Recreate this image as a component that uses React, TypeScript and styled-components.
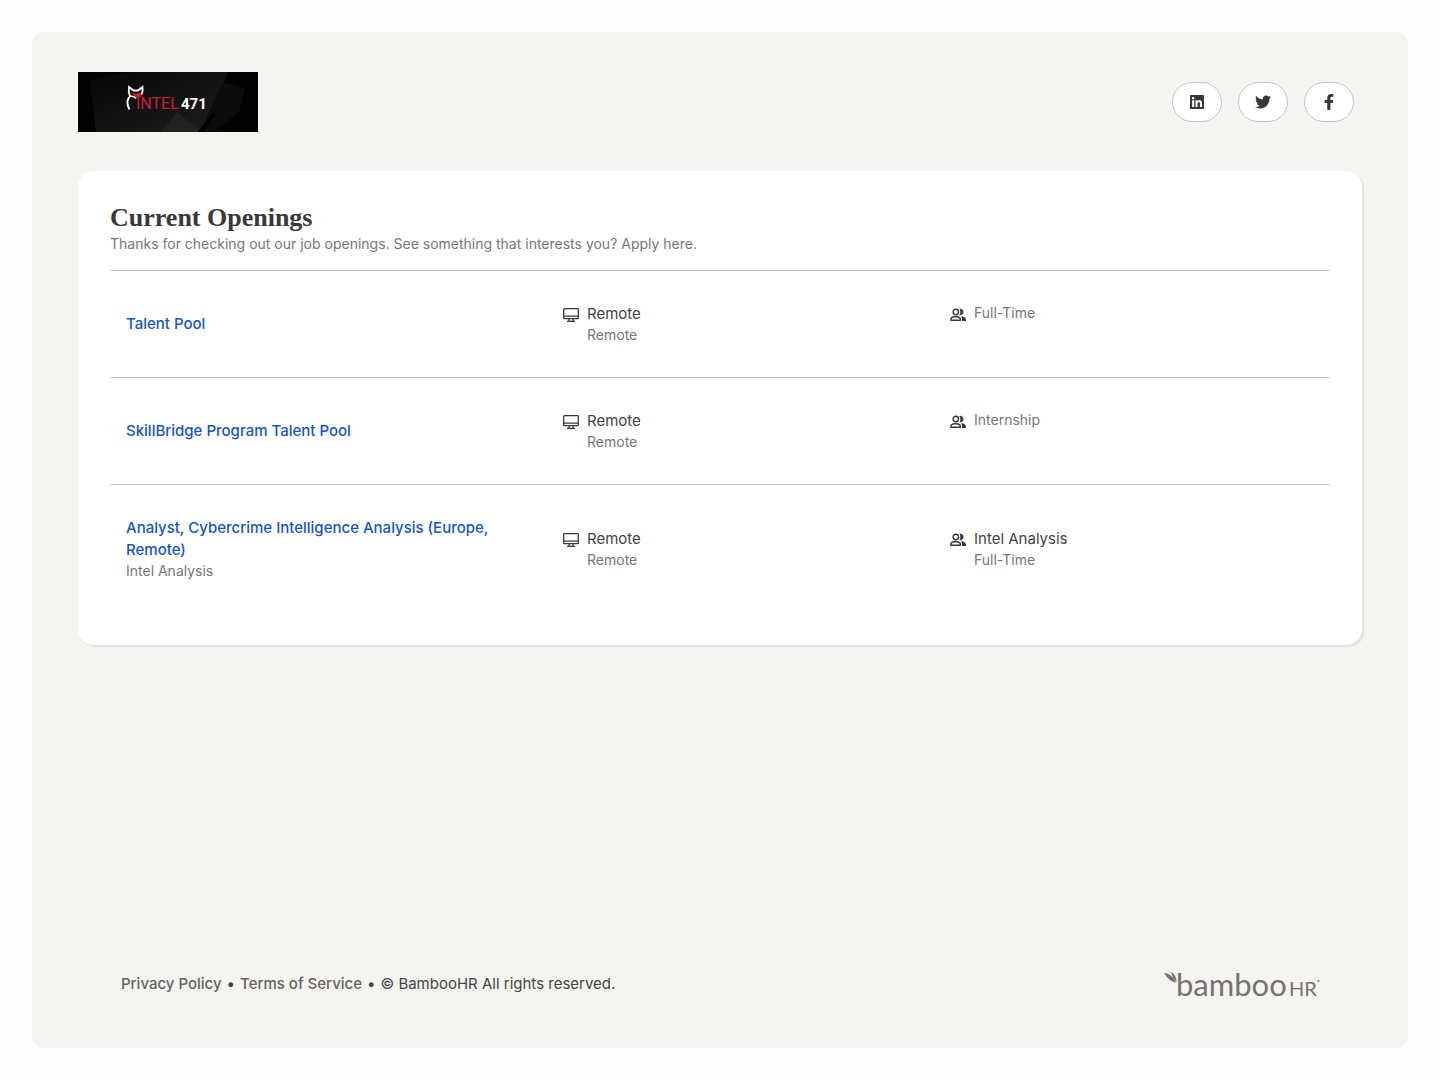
import React from "react";
import styled, { createGlobalStyle } from "styled-components";
import { FaFacebookF, FaLinkedin, FaTwitter } from "react-icons/fa";

const GlobalStyle = createGlobalStyle`
  *, *::before, *::after { box-sizing: border-box; }
  body {
    margin: 0;
    background: #fefefe;
    color: #383838;
    font-family: Inter, "Liberation Sans", sans-serif;
    font-size: 15px;
    line-height: 22px;
  }
`;

const Page = styled.div`
  display: flex;
  min-height: 100vh;
  padding: 32px;
`;

const Shell = styled.div`
  flex: 1;
  display: flex;
  flex-direction: column;
  padding: 40px 46px;
  border-radius: 12px;
  background: #f4f4f0;
`;

const Header = styled.header`
  display: flex;
  align-items: center;
  justify-content: space-between;
  padding-right: 8px;
`;

const LogoLink = styled.a`
  display: block;
  svg { display: block; }
`;

const SocialNav = styled.nav`
  display: flex;
  gap: 16px;
`;

const SocialLink = styled.a`
  display: flex;
  align-items: center;
  justify-content: center;
  width: 50px;
  height: 40px;
  border: 1px solid #c6c4c2;
  border-radius: 20px;
  background: #fff;
  color: #383838;
`;

const Card = styled.main`
  margin-top: 39px;
  padding: 32px;
  border-radius: 16px;
  background: #fff;
  box-shadow: 2px 2px 2px rgba(56, 56, 56, 0.1);
`;

const Title = styled.h1`
  margin: 0;
  color: #383838;
  font-family: "Liberation Serif", serif;
  font-size: 26px;
  font-weight: 700;
  line-height: 30px;
`;

const Intro = styled.p`
  margin: 0 0 16px;
  color: #777;
  font-size: 14px;
  line-height: 21px;
`;

const Openings = styled.ul`
  margin: 0;
  padding: 0;
  list-style: none;
`;

const Opening = styled.li`
  display: grid;
  grid-template-columns: 437fr 387fr 364fr;
  align-items: center;
  padding: 32px 16px;
  border-top: 1px solid #c4c4c4;
`;

const Job = styled.div`
  padding-right: 32px;
`;

const JobLink = styled.a`
  display: block;
  color: #1a55b8;
  font-weight: 500;
  text-decoration: none;
`;

const Detail = styled.div`
  display: flex;
  gap: 8px;
  min-height: 42px;
  svg { flex: none; margin-top: 4px; }
`;

const Primary = styled.div`
  color: #444;
`;

const Secondary = styled.div`
  color: #777;
  font-size: 14px;
  line-height: 20px;
`;

const Footer = styled.footer`
  display: flex;
  align-items: center;
  justify-content: space-between;
  margin-top: auto;
  padding: 0 42px 5px 43px;
`;

const Legal = styled.div`
  display: flex;
  gap: 5px;
  color: #484442;
`;

const LegalLink = styled.a`
  color: #676360;
  font-weight: 500;
  text-decoration: none;
`;

function CompanyLogo() {
  return (
    <svg width="180" height="60" viewBox="0 0 180 60" role="img" aria-label="Intel 471">
      <defs>
        <linearGradient id="facet" x1="0" y1="0" x2="1" y2="1">
          <stop offset="0" stopColor="#060606" />
          <stop offset="1" stopColor="#1e1e1e" />
        </linearGradient>
      </defs>
      <rect width="180" height="60" fill="#020202" />
      <path d="M12 8 50 0h100l-25 60H18Z" fill="url(#facet)" />
      <path d="m83 60 16-20 25 20Z" fill="#222" />
      <path d="m145 10-23 50h14l25-20 6-24Z" fill="#0c0c0c" />
      <path d="m135 40-15 20h5l13-18Z" fill="#000" />
      <path d="M51.500 37.500c-3-5-2.500-10 .5-13.500-1.500-3-1.500-6-1-9l4.500 3.500h4.500l4.500-3.500c.5 3 .3 5-1 7.500" fill="none" stroke="#f4f4f4" strokeWidth="1.900" />
      <path d="M51.500 24.500c3-.5 5 0 6.500 2" fill="none" stroke="#f4f4f4" strokeWidth="1.500" />
      <path d="m53 20.500 4.500 1.500 4.500-1.500 2 4-3 .5-2.500 1.500-2-2.500Z" fill="#c3203a" />
      <text x="58" y="37" fill="#c3203a" fontFamily="Roboto, sans-serif" fontSize="16">INTEL</text>
      <text x="103" y="37" fill="#fff" fontFamily="Roboto, sans-serif" fontWeight="700" fontSize="15">471</text>
    </svg>
  );
}

function MonitorIcon() {
  return (
    <svg width="16" height="16" viewBox="0 0 16 16" fill="none" stroke="#383838" strokeWidth="1.300" aria-hidden="true">
      <rect x="0.700" y="1.700" width="14.600" height="10" rx="0.800" />
      <path d="M1 9.200h14M6 12v2M10 12v2M4 14.300h8" />
    </svg>
  );
}

function PeopleIcon() {
  return (
    <svg width="16" height="16" viewBox="0 0 16 16" aria-hidden="true">
      <circle cx="5.800" cy="5" r="2.700" fill="none" stroke="#383838" strokeWidth="1.400" />
      <path d="M.8 13.300v-.8c0-1.700 1.700-2.800 4.200-2.800h1.200c2.500 0 4.200 1.100 4.200 2.800v.8Z" fill="none" stroke="#383838" strokeWidth="1.400" strokeLinejoin="round" />
      <path d="M9.400 1.800a3.300 3.300 0 1 1 0 6.400c1.300-1.800 1.300-4.600 0-6.400ZM11 9.200c3 .2 5 1.500 5 3.800v1h-4v-1.500c0-1.400-.3-2.400-1-3.300Z" fill="#383838" />
    </svg>
  );
}

function BambooLogo() {
  return (
    <svg width="156" height="38" viewBox="0 0 156 38" role="img" aria-label="BambooHR" fill="#777270">
      <path d="M0 8c5 .5 9.500 3.500 12 9.500C7 17 3 13 0 8ZM7 6.500c3.500 2.500 5.500 6 5.700 10.500C10 14.500 8 11 7 6.500Z" />
      <text x="12" y="31" fontFamily="Lato, sans-serif" fontSize="31">bamboo</text>
      <text x="125" y="31" fontFamily="Lato, sans-serif" fontSize="20">HR</text>
      <circle cx="154.500" cy="16" r="1" />
    </svg>
  );
}

const socials = [
  { name: "LinkedIn", Icon: FaLinkedin },
  { name: "Twitter", Icon: FaTwitter },
  { name: "Facebook", Icon: FaFacebookF },
];

const openings = [
  { title: "Talent Pool", type: "Full-Time" },
  { title: "SkillBridge Program Talent Pool", type: "Internship" },
  {
    title: "Analyst, Cybercrime Intelligence Analysis (Europe, Remote)",
    department: "Intel Analysis",
    type: "Full-Time",
  },
];

export default function App() {
  return (
    <>
      <GlobalStyle />
      <Page>
        <Shell>
          <Header>
            <LogoLink href="#home"><CompanyLogo /></LogoLink>
            <SocialNav aria-label="Social media">
              {socials.map(({ name, Icon }) => (
                <SocialLink key={name} href={`#${name.toLowerCase()}`} aria-label={name}>
                  <Icon size={16} />
                </SocialLink>
              ))}
            </SocialNav>
          </Header>
          <Card>
            <Title>Current Openings</Title>
            <Intro>Thanks for checking out our job openings. See something that interests you? Apply here.</Intro>
            <Openings>
              {openings.map(({ title, department, type }) => (
                <Opening key={title}>
                  <Job>
                    <JobLink href="#job">{title}</JobLink>
                    {department && <Secondary>{department}</Secondary>}
                  </Job>
                  <Detail>
                    <MonitorIcon />
                    <div>
                      <Primary>Remote</Primary>
                      <Secondary>Remote</Secondary>
                    </div>
                  </Detail>
                  <Detail>
                    <PeopleIcon />
                    <div>
                      {department && <Primary>{department}</Primary>}
                      <Secondary>{type}</Secondary>
                    </div>
                  </Detail>
                </Opening>
              ))}
            </Openings>
          </Card>
          <Footer>
            <Legal>
              <LegalLink href="#privacy">Privacy Policy</LegalLink>
              <span>•</span>
              <LegalLink href="#terms">Terms of Service</LegalLink>
              <span>•</span>
              <span>© BambooHR All rights reserved.</span>
            </Legal>
            <BambooLogo />
          </Footer>
        </Shell>
      </Page>
    </>
  );
}
